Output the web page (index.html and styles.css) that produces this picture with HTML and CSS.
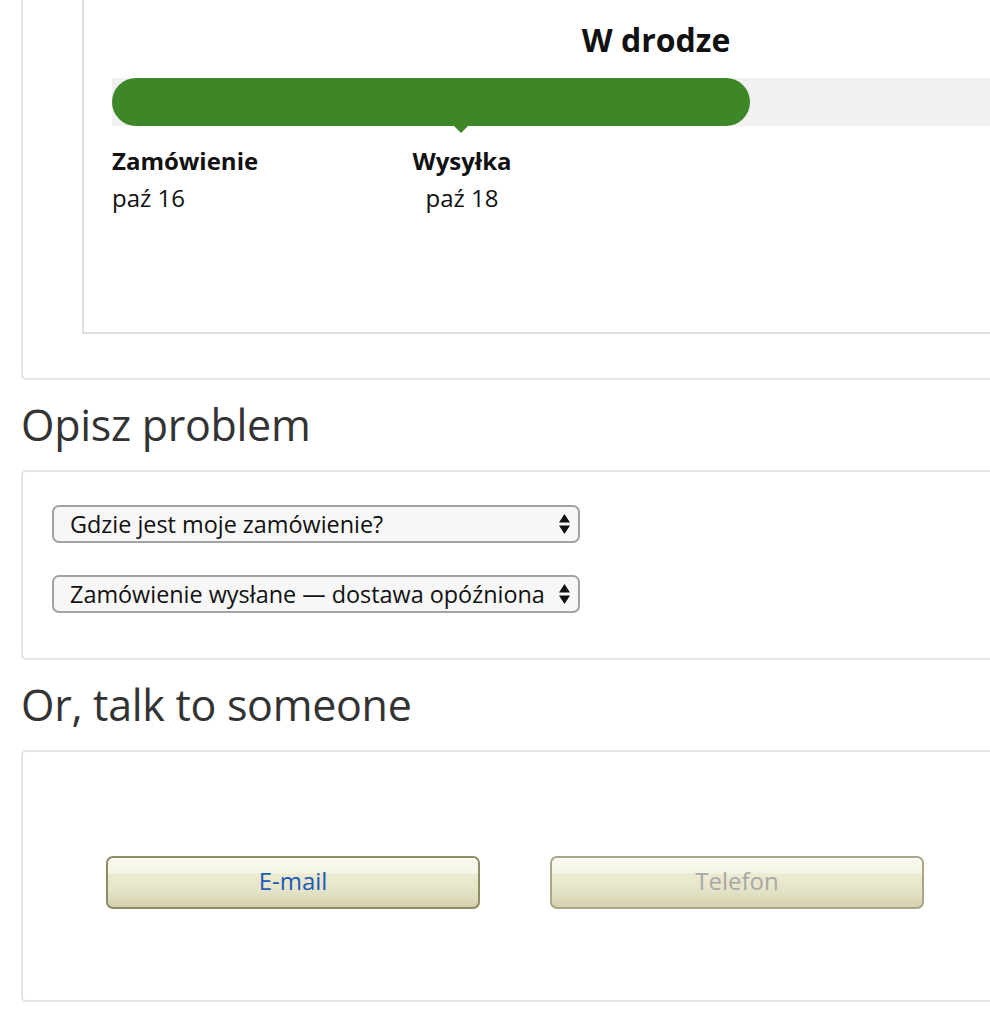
FILE: index.html
```html
<!DOCTYPE html>
<html lang="pl">
<head>
<meta charset="utf-8">
<title>Pomoc</title>
<link rel="stylesheet" href="styles.css">
</head>
<body>
<div class="page">
  <section class="card card-top">
    <div class="tracker">
      <h2 class="status">W drodze</h2>
      <div class="bar">
        <div class="bar-fill" style="width: 58.1%"></div>
        <span class="pointer" style="left: 31.76%"></span>
      </div>
      <div class="milestones">
        <div class="milestone first">
          <div class="m-title">Zamówienie</div>
          <div class="m-date">paź 16</div>
        </div>
        <div class="milestone mid">
          <div class="m-title">Wysyłka</div>
          <div class="m-date">paź 18</div>
        </div>
      </div>
    </div>
  </section>

  <h1 class="heading">Opisz problem</h1>
  <section class="card card-problem">
    <div class="select-wrap">
      <select class="select"><option>Gdzie jest moje zamówienie?</option></select>
      <svg class="arrows" width="13" height="24" viewBox="0 0 13 24"><path d="M6.5 2 L12 10.5 H1 Z M6.5 22 L12 13.5 H1 Z" fill="#111"/></svg>
    </div>
    <div class="select-wrap">
      <select class="select"><option>Zamówienie wysłane — dostawa opóźniona</option></select>
      <svg class="arrows" width="13" height="24" viewBox="0 0 13 24"><path d="M6.5 2 L12 10.5 H1 Z M6.5 22 L12 13.5 H1 Z" fill="#111"/></svg>
    </div>
  </section>

  <h1 class="heading">Or, talk to someone</h1>
  <section class="card card-contact">
    <button class="btn btn-email" type="button">E-mail</button>
    <button class="btn btn-phone" type="button" disabled>Telefon</button>
  </section>
</div>
</body>
</html>
```
FILE: styles.css
```css
html, body {
  margin: 0;
  padding: 0;
  overflow: hidden;
  background: #fff;
}
body {
  font-family: "Open Sans", "Noto Sans", "DejaVu Sans", sans-serif;
  color: #111;
}
.page {
  width: 1300px;
  padding-left: 21px;
}
.card {
  border: 2px solid #e4e4e4;
  border-radius: 5px;
  box-sizing: border-box;
}
.card-top {
  border-top: none;
  border-radius: 0 0 5px 5px;
  padding: 0 0 44px 59px;
}
.tracker {
  border: 2px solid #dedede;
  border-top: none;
  padding: 20px 30px 0 28px;
  height: 334px;
  box-sizing: border-box;
  width: 1160px;
}
.status {
  margin: 0 0 18px;
  text-align: center;
  font-size: 32px;
  line-height: 40px;
  font-weight: 700;
  color: #111;
  transform: translateX(-5px);
}
.bar {
  position: relative;
  height: 48px;
  background: #f1f1f1;
}
.bar-fill {
  height: 100%;
  background: #3d8728;
  border-radius: 24px;
}
.pointer {
  position: absolute;
  top: 48px;
  margin-left: -7px;
  width: 0;
  height: 0;
  border-left: 7px solid transparent;
  border-right: 7px solid transparent;
  border-top: 7px solid #3d8728;
}
.milestones {
  display: flex;
  padding-top: 16px;
}
.milestone {
  font-size: 24px;
  line-height: 37px;
}
.m-title {
  font-weight: 700;
}
.first {
  width: 250px;
}
.mid {
  width: 200px;
  text-align: center;
}
.heading {
  margin: 0;
  font-size: 43px;
  font-weight: 400;
  color: #333;
  line-height: 90px;
  height: 90px;
  letter-spacing: -0.3px;
}
.card-problem {
  height: 190px;
  padding: 33px 0 0 29px;
  display: flex;
  flex-direction: column;
  gap: 32px;
}
.select-wrap {
  position: relative;
  width: 528px;
  height: 38px;
}
.select {
  appearance: none;
  -webkit-appearance: none;
  width: 100%;
  height: 100%;
  box-sizing: border-box;
  border: 2px solid #a3a3a3;
  border-radius: 7px;
  background: #f7f7f7;
  font-family: inherit;
  font-size: 23.4px;
  color: #111;
  padding: 0 0 0 16px;
}
.arrows {
  position: absolute;
  right: 9px;
  top: 7px;
  pointer-events: none;
}
.card-contact {
  height: 252px;
  display: flex;
  align-items: flex-start;
  gap: 70px;
  padding: 104px 0 0 83px;
}
.btn {
  width: 374px;
  height: 53px;
  border: 2px solid #8e8c62;
  border-radius: 7px;
  background: linear-gradient(#f8f8ee 0%, #f5f5e6 30%, #ecebd1 33%, #e6e4c8 65%, #d4d1b1 100%);
  box-shadow: inset 0 1px 0 #fff;
  font-family: inherit;
  font-size: 24px;
  line-height: 1;
  padding: 0 0 4px;
  color: #1a5bb8;
}
.btn-phone {
  color: #a8a8a8;
  border-color: #a9a785;
}
```
